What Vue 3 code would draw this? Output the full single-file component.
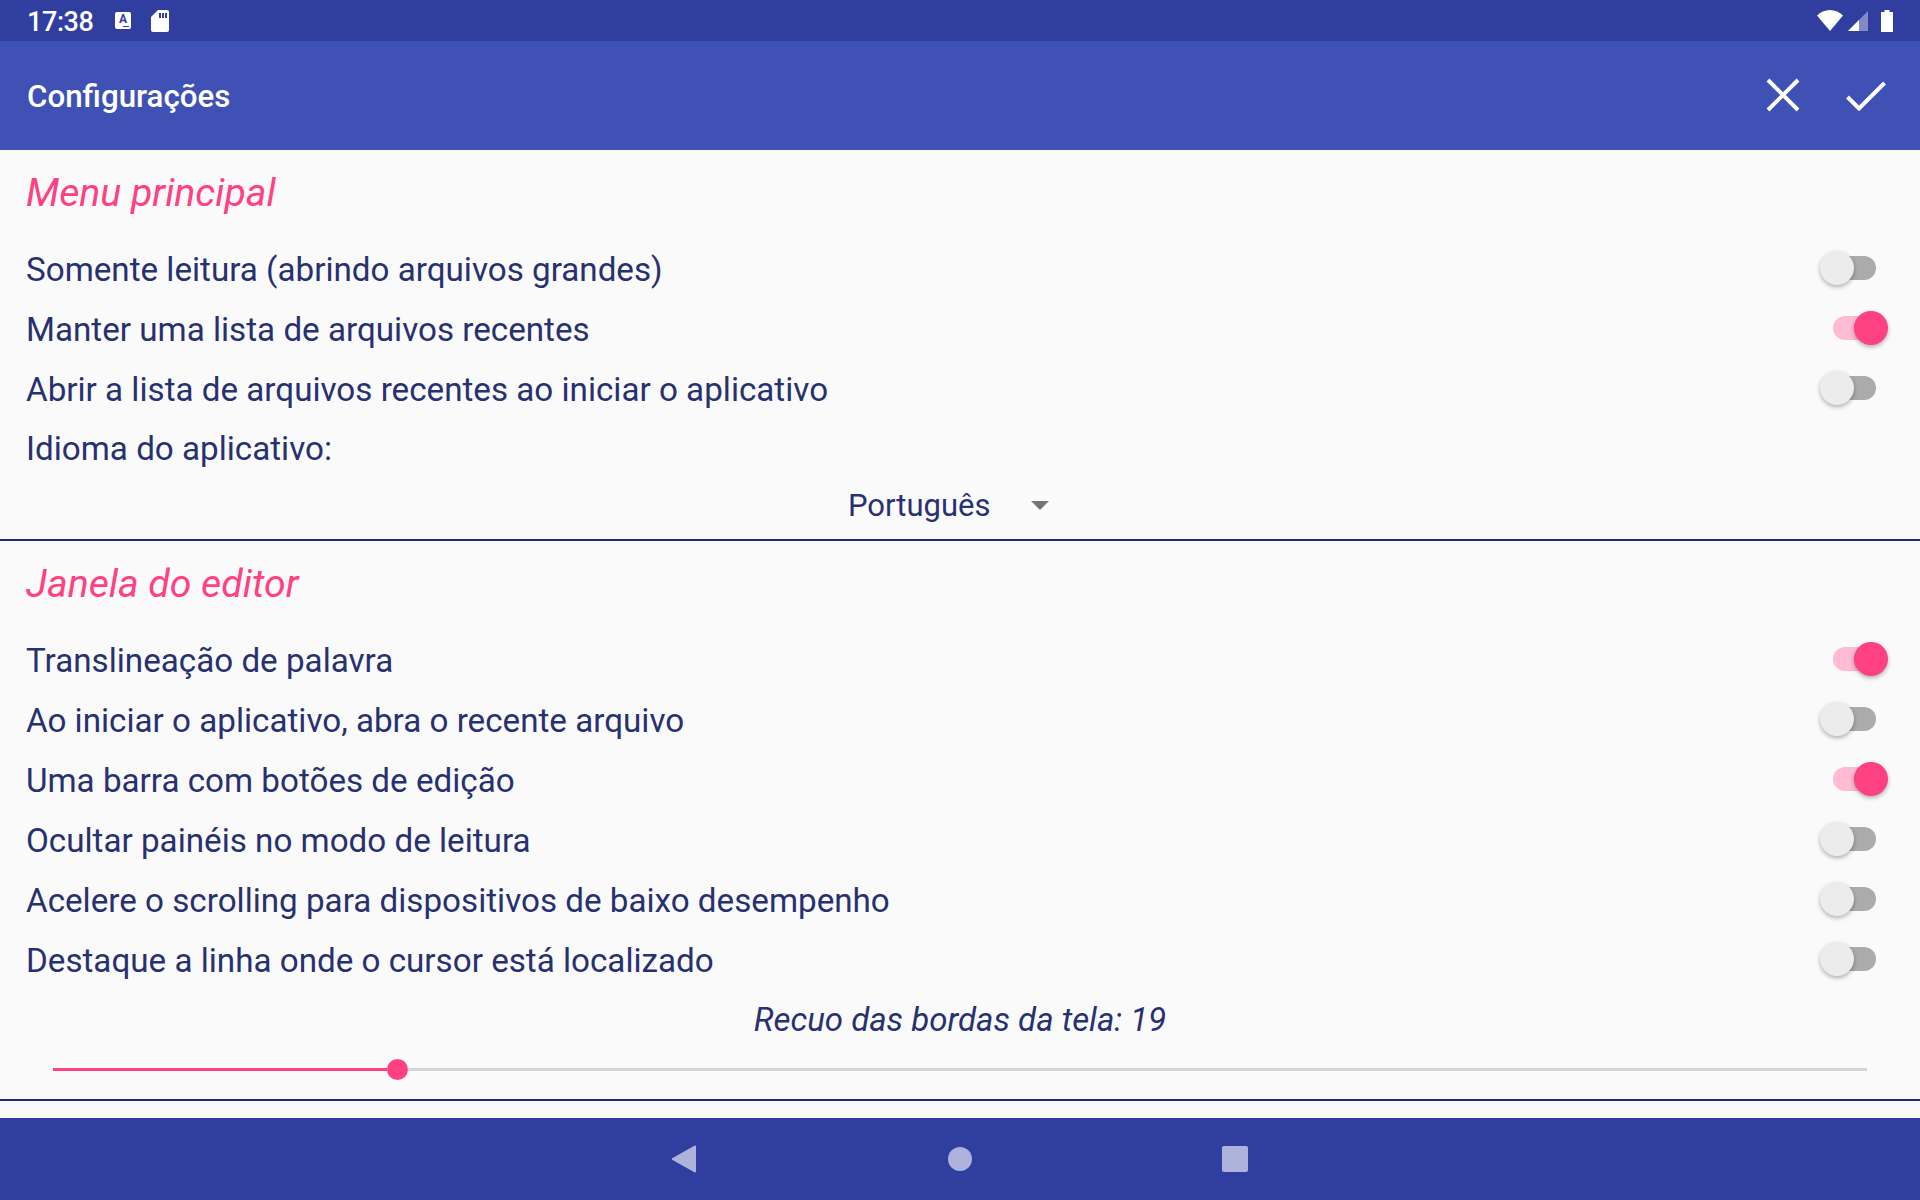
<template>
  <div class="screen">
    <!-- status bar -->
    <div class="status-bar">
      <span class="time">17:38</span>
      <span class="kbd-icon">A<i class="kbd-dots"></i></span>
      <svg class="sd-icon" width="18" height="22" viewBox="0 0 18 22">
        <path fill="#fff" d="M7 0h9a2 2 0 0 1 2 2v18a2 2 0 0 1-2 2H2a2 2 0 0 1-2-2V7z" />
        <path fill="#303f9f" d="M8 3h2v5H8zM11 3h2v5h-2zM14 3h2v5h-2z" />
      </svg>
      <div class="spacer"></div>
      <svg width="26" height="21" viewBox="0 0 26 21">
        <path fill="#fff" d="M13 21 0 5.500C3.500 2.200 8 0 13 0s9.500 2.200 13 5.500z" />
      </svg>
      <svg class="signal" width="20" height="20" viewBox="0 0 20 20">
        <path fill="#fff" opacity="0.4" d="M20 0v20H0z" />
        <path fill="#fff" d="M11 9v11H0z" />
      </svg>
      <svg class="battery" width="12" height="22" viewBox="0 0 12 22">
        <path fill="#fff" d="M3.500 2V0h5v2H12v20H0V2z" />
      </svg>
    </div>

    <!-- toolbar -->
    <div class="toolbar">
      <span class="title">Configurações</span>
      <div class="spacer"></div>
      <svg class="close-icon" width="34" height="34" viewBox="0 0 34 34">
        <path d="M2 2l30 30M32 2 2 32" stroke="#fff" stroke-width="4" fill="none" />
      </svg>
      <svg class="check-icon" width="40" height="30" viewBox="0 0 40 30">
        <path d="M1.500 16 13 27.500 38.500 2" stroke="#fff" stroke-width="4" fill="none" />
      </svg>
    </div>

    <div class="content">
      <section class="section">
        <h2 class="section-title">Menu principal</h2>
        <div v-for="r in menuRows" :key="r.text" class="row">
          <span>{{ r.text }}</span>
          <div class="switch" :class="{ on: r.on }">
            <div class="track"></div>
            <div class="thumb"></div>
          </div>
        </div>
        <div class="row short">Idioma do aplicativo:</div>
        <div class="spinner">
          <span>Português</span>
          <span class="arrow"></span>
        </div>
      </section>

      <section class="section second">
        <h2 class="section-title">Janela do editor</h2>
        <div v-for="r in editorRows" :key="r.text" class="row">
          <span>{{ r.text }}</span>
          <div class="switch" :class="{ on: r.on }">
            <div class="track"></div>
            <div class="thumb"></div>
          </div>
        </div>
        <div class="slider-label">Recuo das bordas da tela: {{ indent }}</div>
        <div class="slider">
          <div class="slider-fill" :style="{ width: fillWidth + 'px' }"></div>
          <div class="slider-thumb"></div>
          <div class="slider-rest"></div>
        </div>
      </section>
    </div>

    <!-- navigation bar -->
    <div class="nav-bar">
      <div class="nav-slot">
        <svg width="24" height="28" viewBox="0 0 24 28">
          <path fill="#aeb3dc" d="M23 .5a1 1 0 0 1 1 1v25a1 1 0 0 1-1 1 1 1 0 0 1-.6-.2L.6 15a1 1 0 0 1 0-2L22.400.7a1 1 0 0 1 .6-.2z" />
        </svg>
      </div>
      <div class="nav-slot"><div class="nav-circle"></div></div>
      <div class="nav-slot"><div class="nav-square"></div></div>
    </div>
  </div>
</template>

<script setup>
const menuRows = [
  { text: 'Somente leitura (abrindo arquivos grandes)', on: false },
  { text: 'Manter uma lista de arquivos recentes', on: true },
  { text: 'Abrir a lista de arquivos recentes ao iniciar o aplicativo', on: false },
]

const editorRows = [
  { text: 'Translineação de palavra', on: true },
  { text: 'Ao iniciar o aplicativo, abra o recente arquivo', on: false },
  { text: 'Uma barra com botões de edição', on: true },
  { text: 'Ocultar painéis no modo de leitura', on: false },
  { text: 'Acelere o scrolling para dispositivos de baixo desempenho', on: false },
  { text: 'Destaque a linha onde o cursor está localizado', on: false },
]

const indent = 19
const fillWidth = 334
</script>

<style>
html, body {
  margin: 0;
  background: #fafafa;
}
</style>

<style scoped>
.screen {
  width: 1920px;
  height: 1200px;
  display: flex;
  flex-direction: column;
  overflow: hidden;
  background: #fafafa;
  font-family: Roboto, "Liberation Sans", sans-serif;
  color: #283170;
}

.spacer { flex: 1; }

.status-bar {
  height: 41px;
  flex: none;
  background: #303f9f;
  display: flex;
  align-items: center;
  padding: 0 27px;
  color: #fff;
}

.time {
  font-size: 27px;
  font-weight: 500;
  width: 88px;
  letter-spacing: -0.4px;
  padding-top: 2px;
}

.kbd-icon {
  width: 16px;
  height: 17px;
  background: #fff;
  border-radius: 2px;
  color: #303f9f;
  font-size: 12px;
  font-weight: 700;
  line-height: 15px;
  text-align: center;
  position: relative;
}

.kbd-dots {
  position: absolute;
  right: 2px;
  bottom: 2px;
  width: 6px;
  height: 1px;
  background: #303f9f;
}

.sd-icon { margin-left: 20px; }
.signal { margin-left: 5px; }
.battery { margin-left: 13px; }

.toolbar {
  height: 109px;
  flex: none;
  background: #3f51b5;
  display: flex;
  align-items: center;
  padding: 0 34px 0 27px;
  color: #fff;
}

.title {
  font-size: 31.3px;
  font-weight: 500;
  padding-top: 2px;
}

.close-icon {
  margin-right: 46px;
  margin-bottom: 2px;
}

.content {
  flex: 1;
  display: flex;
  flex-direction: column;
}

.section {
  border-bottom: 2px solid #1f2b6f;
  height: 391px;
  box-sizing: border-box;
}

.section.second {
  height: 560px;
}

.section-title {
  margin: 0;
  height: 90px;
  padding: 20px 26px 0;
  box-sizing: border-box;
  font-size: 39.2px;
  font-weight: 400;
  font-style: italic;
  line-height: 46px;
  color: #ff4081;
}

.row {
  height: 60px;
  display: flex;
  align-items: center;
  justify-content: space-between;
  padding: 0 26px 2px;
  box-sizing: border-box;
  font-size: 33.2px;
}

.row.short { height: 58px; }

.switch {
  position: relative;
  width: 69px;
  height: 34px;
  margin-right: 6px;
  top: -1px;
}

.track {
  position: absolute;
  left: 14px;
  right: 12px;
  top: 5px;
  height: 24px;
  border-radius: 12px;
  background: #ababab;
}

.thumb {
  position: absolute;
  left: 1px;
  top: 0;
  width: 34px;
  height: 34px;
  border-radius: 50%;
  background: #ececec;
  box-shadow: 0 2px 4px rgba(0, 0, 0, 0.3);
}

.switch.on .track { background: #fdbcd2; }
.switch.on .thumb {
  left: auto;
  right: 0;
  background: #ff4081;
}

.spinner {
  height: 54px;
  display: flex;
  align-items: center;
  padding-left: 848px;
  font-size: 31px;
}

.arrow {
  margin-left: 41px;
  border-left: 9px solid transparent;
  border-right: 9px solid transparent;
  border-top: 9px solid #757575;
}

.slider-label {
  height: 58px;
  display: flex;
  align-items: center;
  justify-content: center;
  padding-bottom: 1px;
  box-sizing: border-box;
  font-size: 33px;
  font-style: italic;
}

.slider {
  display: flex;
  align-items: center;
  height: 40px;
  margin: 0 53px;
}

.slider-fill {
  height: 3px;
  background: #ff4081;
}

.slider-thumb {
  width: 21px;
  height: 21px;
  border-radius: 50%;
  background: #ff4081;
  flex: none;
}

.slider-rest {
  flex: 1;
  height: 3px;
  background: #d4d4d4;
}

.nav-bar {
  height: 82px;
  flex: none;
  background: #303f9f;
  display: flex;
  justify-content: center;
  align-items: center;
}

.nav-slot {
  width: 276px;
  display: flex;
  justify-content: center;
}

.nav-circle {
  width: 24px;
  height: 24px;
  border-radius: 50%;
  background: #aeb3dc;
}

.nav-square {
  width: 26px;
  height: 26px;
  margin-right: 2px;
  border-radius: 2px;
  background: #aeb3dc;
}
</style>
